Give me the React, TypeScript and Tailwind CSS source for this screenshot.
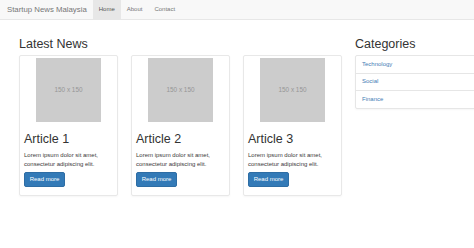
import React from "react";

const articles = ["Article 1", "Article 2", "Article 3"];
const categories = ["Technology", "Social", "Finance"];

export default function App() {
  return (
    <div
      className="w-[474px] h-[248px] overflow-hidden bg-white text-[#333]"
      style={{ fontFamily: '"Liberation Sans", Arial, sans-serif' }}
    >
      <nav className="flex h-[20px] items-stretch border-b border-[#e7e7e7] bg-[#f8f8f8]">
        <div className="flex items-center pl-[7px] pr-[6px] text-[7.8px] text-[#777]">
          Startup News Malaysia
        </div>
        <div className="flex items-stretch text-[6px]">
          <div className="flex items-center bg-[#e7e7e7] px-[6px] text-[#555]">Home</div>
          <div className="flex items-center px-[6px] text-[#777]">About</div>
          <div className="flex items-center px-[6px] text-[#777]">Contact</div>
        </div>
      </nav>

      <div className="flex pl-[19px] pt-[17px]">
        <div className="w-[323px]">
          <h2 className="h-[14px] text-[12.5px] leading-[14px] font-normal">Latest News</h2>
          <div className="mt-[4px] flex gap-[13px]">
            {articles.map((a) => (
              <div
                key={a}
                className="w-[99px] rounded-[2px] border border-[#e8e8e8] p-[2px] shadow-[0_1px_2px_rgba(0,0,0,0.04)]"
              >
                <div className="mx-auto flex h-[64px] w-[65px] items-center justify-center bg-[#cccccc] text-[6.4px] text-[#969696]">
                  150 x 150
                </div>
                <div className="px-[2px] pb-[6px]">
                  <h3 className="mt-[10px] h-[14px] text-[12.5px] leading-[14px] font-normal">{a}</h3>
                  <p className="mt-[5px] text-[6px] leading-[8.5px] text-[#3a3a3a]">
                    Lorem ipsum dolor sit amet,
                    <br />
                    consectetur adipiscing elit.
                  </p>
                  <button className="mt-[4px] flex h-[15px] w-[41px] items-center justify-center rounded-[2px] border border-[#2e6da4] bg-[#337ab7] text-[6px] text-white">
                    Read more
                  </button>
                </div>
              </div>
            ))}
          </div>
        </div>

        <div className="ml-[13px] w-[150px] shrink-0">
          <h2 className="h-[14px] text-[12.5px] leading-[14px] font-normal">Categories</h2>
          <div className="mt-[4px] rounded-[2px] border border-[#e6e6e6] shadow-[0_1px_2px_rgba(0,0,0,0.04)]">
            {categories.map((c, i) => (
              <div
                key={c}
                className={
                  i === 0
                    ? "flex h-[16.5px] items-center px-[6px] text-[6px] text-[#3f7db5]"
                    : "flex h-[17.5px] items-center border-t border-[#e6e6e6] px-[6px] text-[6px] text-[#3f7db5]"
                }
              >
                {c}
              </div>
            ))}
          </div>
        </div>
      </div>
    </div>
  );
}
